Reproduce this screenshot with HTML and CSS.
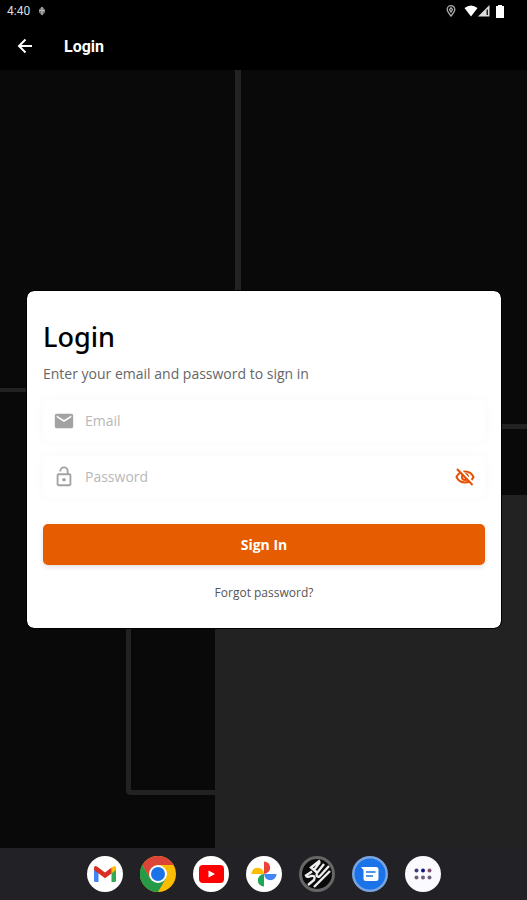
FILE: index.html
```html
<!DOCTYPE html>
<html lang="en">
<head>
    <meta charset="UTF-8">
    <meta name="viewport" content="width=device-width, initial-scale=1.0">
    <link rel="stylesheet" href="styles.css">
    <title>Login</title>
</head>
<body>
    <div class="status-bar">
        <span class="clock">4:40</span>
        <svg class="status-debug" width="8" height="10" viewBox="0 0 8 10">
            <path d="M4 0.500L7 3.500V6.500L4 9.500L1 6.500V3.500Z" fill="#777"/>
            <path d="M4 1V9M1 4.500H7" stroke="#bbb"/>
        </svg>
        <div class="status-icons">
            <svg width="10" height="12" viewBox="0 0 10 12" fill="none" stroke="#aaa" stroke-width="1.300">
                <path d="M5 11C3 8.500 1.200 6.500 1.200 4.500a3.800 3.800 0 0 1 7.600 0C8.800 6.500 7 8.500 5 11Z"/>
                <path d="M5 2.800L6.500 4.500L5 7L3.500 4.500Z"/>
            </svg>
            <svg class="wifi" width="14" height="12" viewBox="0 0 14 12">
                <path d="M0.500 3Q7-2 13.500 3L7 11.500Z" fill="#fff"/>
            </svg>
            <svg width="12" height="12" viewBox="0 0 12 12">
                <path d="M0 11.500L11.500 0V11.500Z" fill="#ddd"/>
                <path d="M8.500 4.500H10V10H8.500Z" fill="#222"/>
            </svg>
            <svg class="battery" width="8" height="13" viewBox="0 0 8 13">
                <path d="M2 0H6V1H8V13H0V1H2Z" fill="#fff"/>
            </svg>
        </div>
    </div>

    <header class="app-bar">
        <button class="back" type="button" aria-label="Back">
            <svg width="16" height="16" viewBox="0 0 16 16" fill="none" stroke="#fff" stroke-width="2">
                <path d="M15 8H2.500M8.500 1.500L2 8L8.500 14.500"/>
            </svg>
        </button>
        <h1>Login</h1>
    </header>

    <main>
        <svg class="backdrop" viewBox="0 0 527 778" preserveAspectRatio="none" aria-hidden="true">
            <g fill="#222">
                <rect x="235" y="0" width="6" height="320"/>
                <rect x="0" y="318" width="60" height="4"/>
                <rect x="460" y="354" width="67" height="5"/>
                <rect x="215" y="425" width="312" height="353"/>
            </g>
            <path d="M128.500 500V720Q128.500 722.500 131 722.500H216" fill="none" stroke="#222" stroke-width="5"/>
        </svg>

        <form class="card">
            <h2>Login</h2>
            <p>Enter your email and password to sign in</p>

            <div class="field">
                <svg width="22" height="22" viewBox="0 0 24 24" fill="#a2a2a2">
                    <path d="M20 4H4c-1.100 0-2 .9-2 2v12c0 1.100.9 2 2 2h16c1.100 0 2-.9 2-2V6c0-1.100-.9-2-2-2zm0 4l-8 5-8-5V6l8 5 8-5v2z"/>
                </svg>
                <input type="email" placeholder="Email" aria-label="Email">
            </div>

            <div class="field">
                <svg width="22" height="22" viewBox="0 0 24 24" fill="none" stroke="#a2a2a2" stroke-width="2">
                    <rect x="5" y="9" width="14" height="12" rx="1"/>
                    <path d="M8 6V5.500a4 4 0 0 1 8 0V9"/>
                    <circle cx="12" cy="15" r="2" fill="#a2a2a2" stroke="none"/>
                </svg>
                <input type="password" placeholder="Password" aria-label="Password">
                <button class="toggle" type="button" aria-label="Show password">
                    <svg width="20" height="20" viewBox="0 0 20 20" fill="none" stroke="#e65100" stroke-width="2">
                        <path d="M1.500 10Q4 4.500 10 4.500T18.500 10Q16 15.500 10 15.500T1.500 10Z"/>
                        <circle cx="10" cy="10" r="3"/>
                        <path d="M3.500 1L18.500 16.500" stroke="#fff"/>
                        <path d="M2 2L17.500 18"/>
                    </svg>
                </button>
            </div>

            <button class="sign-in" type="submit">Sign In</button>
            <a class="forgot" href="#">Forgot password?</a>
        </form>
    </main>

    <nav class="dock">
        <a href="#" aria-label="Gmail">
            <svg viewBox="0 0 36 36">
                <circle cx="18" cy="18" r="18" fill="#fff"/>
                <path d="M7 11.500L11.500 14V26H8.500Q7 26 7 24.500Z" fill="#4285f4"/>
                <path d="M29 11.500L24.500 14V26H27.500Q29 26 29 24.500Z" fill="#34a853"/>
                <path d="M24.500 12L26 10.500Q29 9 29 12.500V14L24.500 17.500Z" fill="#fbbc04"/>
                <path d="M7 14V12.500Q7 9 10 10.500L18 16.500L24.500 11.500V17.500L18 22.300Z" fill="#d93025"/>
            </svg>
        </a>
        <a href="#" aria-label="Chrome">
            <svg viewBox="0 0 36 36">
                <circle cx="18" cy="18" r="18" fill="#fbbc04"/>
                <path d="M2.400 9A18 18 0 0 1 33.600 9H18L10.200 22.500Z" fill="#db4437"/>
                <path d="M2.400 9L10.200 22.500H25.800L18 36A18 18 0 0 1 2.400 9Z" fill="#259b48"/>
                <circle cx="18" cy="18" r="9" fill="#fff"/>
                <circle cx="18" cy="18" r="7" fill="#1a73e8"/>
            </svg>
        </a>
        <a href="#" aria-label="YouTube">
            <svg viewBox="0 0 36 36">
                <circle cx="18" cy="18" r="18" fill="#fff"/>
                <rect x="6" y="9" width="25" height="18" rx="4" fill="#f00"/>
                <path d="M15.500 14.500L22 18L15.500 21.500Z" fill="#fff"/>
            </svg>
        </a>
        <a href="#" aria-label="Photos">
            <svg viewBox="0 0 36 36">
                <circle cx="18" cy="18" r="18" fill="#fff"/>
                <path d="M18 5.500A6.200 6.200 0 0 1 18 17.900Z" fill="#ea4335"/>
                <path d="M30.500 18A6.200 6.200 0 0 1 18.100 18Z" fill="#4285f4"/>
                <path d="M18 30.500A6.200 6.200 0 0 1 18 18.100Z" fill="#1fa653"/>
                <path d="M5.500 18A6.200 6.200 0 0 1 17.900 18Z" fill="#fbbc04"/>
            </svg>
        </a>
        <a href="#" aria-label="App">
            <svg viewBox="0 0 36 36" fill="none">
                <circle cx="18" cy="18" r="16.500" fill="#090909" stroke="#666" stroke-width="3"/>
                <g stroke="#eee" stroke-width="2.400">
                    <path d="M21 4.500L12 11.500L18 16.500M21 6L15 14"/>
                    <path d="M25 8L18 17Q16.500 21.500 20.500 20.500L30 10"/>
                    <path d="M13 15.500L7 19.500Q8 22 12 20Q17 19 15 24L9 29"/>
                    <path d="M31 15L19 27L15 31"/>
                </g>
            </svg>
        </a>
        <a href="#" aria-label="Messages">
            <svg viewBox="0 0 36 36">
                <circle cx="18" cy="18" r="18" fill="#78a5df"/>
                <circle cx="18" cy="18" r="15.500" fill="#1a73e8"/>
                <path d="M9 11H24Q26.500 11 26.500 13.500V22.500Q26.500 25 24 25H14Q11.500 25 11.500 22.500V14Z" fill="#fff"/>
                <path d="M14 16H23.500M14 20H21" stroke="#1a73e8" stroke-width="1.500"/>
            </svg>
        </a>
        <a href="#" aria-label="All apps">
            <svg viewBox="0 0 36 36">
                <circle cx="18" cy="18" r="18" fill="#fbfbff"/>
                <g fill="#6a6078">
                    <circle cx="11.500" cy="14.500" r="2" fill="#3c3c80"/>
                    <circle cx="18" cy="14.500" r="2" fill="#14148a"/>
                    <circle cx="24.500" cy="14.500" r="2" fill="#80536f"/>
                    <circle cx="11.500" cy="21.500" r="2"/>
                    <circle cx="18" cy="21.500" r="2"/>
                    <circle cx="24.500" cy="21.500" r="2"/>
                </g>
            </svg>
        </a>
    </nav>
</body>
</html>
```

FILE: styles.css
```css
* {
    box-sizing: border-box;
}

body {
    display: flex;
    flex-direction: column;
    min-height: 100vh;
    margin: 0;
    font-family: "Open Sans", "Noto Sans", sans-serif;
    background-color: #000;
}

svg {
    display: block;
}

button {
    border: none;
    cursor: pointer;
}

.status-bar {
    display: flex;
    align-items: center;
    height: 22px;
    padding: 0 23px 0 7px;
    font-family: Roboto, sans-serif;
    font-size: 12px;
    color: #ddd;
}

.status-debug {
    margin-left: 8px;
}

.status-icons {
    display: flex;
    align-items: center;
    margin-left: auto;
}

.wifi {
    margin-left: 8px;
}

.battery {
    margin-left: 6px;
}

.app-bar {
    display: flex;
    align-items: center;
    height: 48px;
    padding: 0 17px;
    gap: 31px;
}

.app-bar h1 {
    margin: 0;
    font-family: Roboto, sans-serif;
    font-size: 16px;
    font-weight: bold;
    color: #fff;
}

.back {
    padding: 0;
    background: none;
}

/* backdrop and card share one grid cell */
main {
    flex: 1;
    display: grid;
    align-items: center;
    background-color: #090909;
}

.backdrop {
    grid-area: 1 / 1;
    width: 100%;
    height: 100%;
}

.card {
    z-index: 1;
    grid-area: 1 / 1;
    display: flex;
    flex-direction: column;
    margin: 0 25px 0 26px;
    padding: 28px 16px 25px;
    background-color: #fff;
    border: 1px solid #000;
    border-radius: 8px;
    background-clip: padding-box;
}

.card h2 {
    margin: 0;
    font-family: "Noto Sans", "Open Sans", sans-serif;
    font-size: 27px;
    font-weight: 500;
    line-height: 36px;
    color: #000;
}

.card p {
    margin: 9px 0 16px;
    font-size: 14px;
    font-weight: 500;
    line-height: 20px;
    color: #666;
}

.field {
    display: flex;
    align-items: center;
    height: 42px;
    margin-bottom: 14px;
    padding: 0 10px;
    gap: 10px;
    background-color: #fff;
    border-radius: 6px;
    box-shadow: 0 0 12px rgba(0, 0, 0, 0.03);
}

.field input {
    flex: 1;
    min-width: 0;
    padding: 0;
    border: none;
    outline: none;
    font-family: inherit;
    font-size: 14px;
    background: none;
}

.field input::placeholder {
    color: #b8b8b8;
}

.toggle {
    padding: 0;
    background: none;
}

.sign-in {
    height: 41px;
    margin-top: 12px;
    font-family: inherit;
    font-size: 14px;
    font-weight: bold;
    color: #fff;
    background-color: #e65c00;
    border-radius: 5px;
    box-shadow: 0 2px 5px rgba(0, 0, 0, 0.12);
}

.forgot {
    align-self: center;
    margin-top: 18px;
    font-size: 12px;
    font-weight: 500;
    line-height: 20px;
    color: #555;
    text-decoration: none;
}

.dock {
    display: flex;
    justify-content: center;
    gap: 17px;
    padding: 8px 0;
    background-color: #222226;
}

.dock svg {
    width: 36px;
    height: 36px;
}
```
